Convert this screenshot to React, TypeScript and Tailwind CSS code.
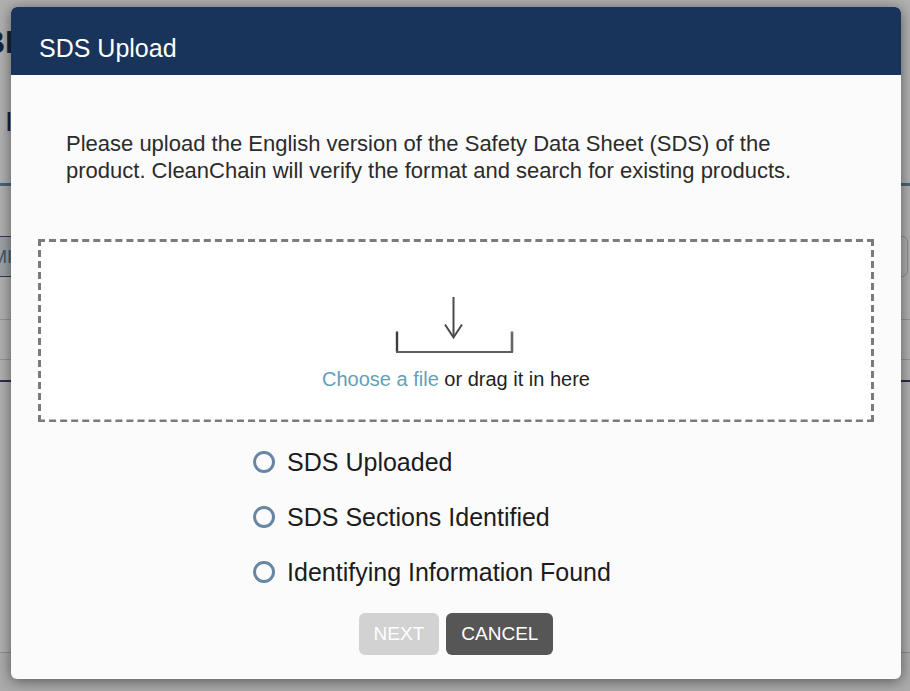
import { useState } from 'react';

const steps = [
  { id: 'uploaded', label: 'SDS Uploaded' },
  { id: 'sections', label: 'SDS Sections Identified' },
  { id: 'found', label: 'Identifying Information Found' },
];

function PageBehind() {
  return (
    <div aria-hidden="true" className="flex min-h-screen flex-col overflow-hidden bg-[#b0b0b0] text-[#16243f]">
      <div className="flex h-[183px] flex-col gap-10 pt-6">
        <p className="-ml-[18px] text-[32px] leading-9 font-bold">BI</p>
        <p className="ml-[5px] text-[28px] leading-11">I</p>
      </div>
      <div className="h-[3px] bg-[#48637a]" />
      <div className="h-[50px]" />
      <div className="flex h-[41px] pr-[2px]">
        <div className="w-1/2 border-y border-[#34345a] bg-[#9ba2a5]">
          <p className="-ml-2 text-lg leading-10 text-[#3f5468]">MI</p>
        </div>
        <div className="w-1/2 rounded-r-md border border-[#8b8b8b]" />
      </div>
      <div className="h-[43px] border-b border-[#949494]" />
      <div className="h-10 border-b border-[#949494]" />
      <div className="h-[22px] border-b-2 border-[#2c2c4a]" />
      <div className="h-[271px] border-b border-[#8f8f8f]" />
      <div className="flex-1 bg-[#ababab]" />
    </div>
  );
}

// Dashes are longer than the browser's own dashed border
function DashedOutline() {
  return (
    <svg
      className="pointer-events-none absolute inset-0 size-full"
      stroke="#7b7b7b"
      strokeWidth="6"
      strokeDasharray="7 4"
      aria-hidden="true"
    >
      <line x1="0" y1="0" x2="100%" y2="0" pathLength="832" />
      <line x1="0" y1="100%" x2="100%" y2="100%" pathLength="832" strokeWidth="5" />
      <line x1="0" y1="0" x2="0" y2="100%" pathLength="183" />
      <line x1="100%" y1="0" x2="100%" y2="100%" pathLength="183" />
    </svg>
  );
}

function UploadIcon() {
  return (
    <svg width="124" height="58" viewBox="0 0 124 58" fill="none" aria-hidden="true">
      <path d="M59.5 1V41" stroke="#4a4a4a" strokeWidth="2" />
      <path d="M51 28.5L59.5 41.5L68 28.5" stroke="#4a4a4a" strokeWidth="2" />
      <path d="M3 35.5V56" stroke="#3d3d3d" strokeWidth="2.4" />
      <path d="M118 35.5V56" stroke="#666" strokeWidth="2.6" />
      <path d="M2 56H119" stroke="#606060" strokeWidth="2" />
    </svg>
  );
}

export default function App() {
  const [open, setOpen] = useState(true);
  const [fileName, setFileName] = useState('');

  return (
    <div className="relative font-['Liberation_Sans',Arial,sans-serif]">
      <PageBehind />

      {open && (
        <div className="absolute inset-0 pt-[7px] pr-[9px] pb-3 pl-[11px]">
          <div
            role="dialog"
            aria-labelledby="dialog-title"
            className="overflow-hidden rounded-md bg-[#fbfbfb] shadow-[0_2px_14px_rgba(0,0,0,0.5)]"
          >
            <header className="bg-[#19345a] px-7 pt-[27px] pb-[13px]">
              <h1 id="dialog-title" className="text-[25px] leading-7 text-white">
                SDS Upload
              </h1>
            </header>

            <div className="px-[27px] pt-[55px] pb-6">
              <p className="px-7 text-[22px] leading-[27px] text-[#2b2b2b]">
                Please upload the English version of the Safety Data Sheet (SDS) of the product. CleanChain will verify
                the format and search for existing products.
              </p>

              {/* Drop zone */}
              <div className="relative mt-[55px] flex flex-col items-center bg-white pt-[57px] pb-[29px]">
                <DashedOutline />
                <UploadIcon />
                <p className="mt-[11px] text-xl leading-7 text-[#1f1f1f]">
                  <label htmlFor="sds-file" className="cursor-pointer text-[#65a0b5]">
                    Choose a file
                  </label>{' '}
                  {fileName || 'or drag it in here'}
                </p>
                <input
                  id="sds-file"
                  type="file"
                  className="sr-only"
                  onChange={e => setFileName(e.target.files?.[0]?.name ?? '')}
                />
              </div>

              <div className="mx-auto mt-6 flex w-fit flex-col gap-[23px] pr-12">
                {steps.map(step => (
                  <div key={step.id} className="flex items-center gap-3">
                    <input
                      id={step.id}
                      type="radio"
                      name="step"
                      className="size-[22px] appearance-none rounded-full border-3 border-[#6686a3] checked:bg-[#6686a3]"
                    />
                    <label htmlFor={step.id} className="text-[25px] leading-8 text-[#1c1c1c]">
                      {step.label}
                    </label>
                  </div>
                ))}
              </div>

              <div className="mt-[25px] flex justify-center gap-[7px]">
                <button
                  type="button"
                  disabled
                  className="h-[42px] rounded-md bg-[#d2d2d2] px-[15px] text-[19px] text-white"
                >
                  NEXT
                </button>
                <button
                  type="button"
                  onClick={() => setOpen(false)}
                  className="h-[42px] rounded-md bg-[#565656] px-[15px] text-[19px] text-white"
                >
                  CANCEL
                </button>
              </div>
            </div>
          </div>
        </div>
      )}
    </div>
  );
}
